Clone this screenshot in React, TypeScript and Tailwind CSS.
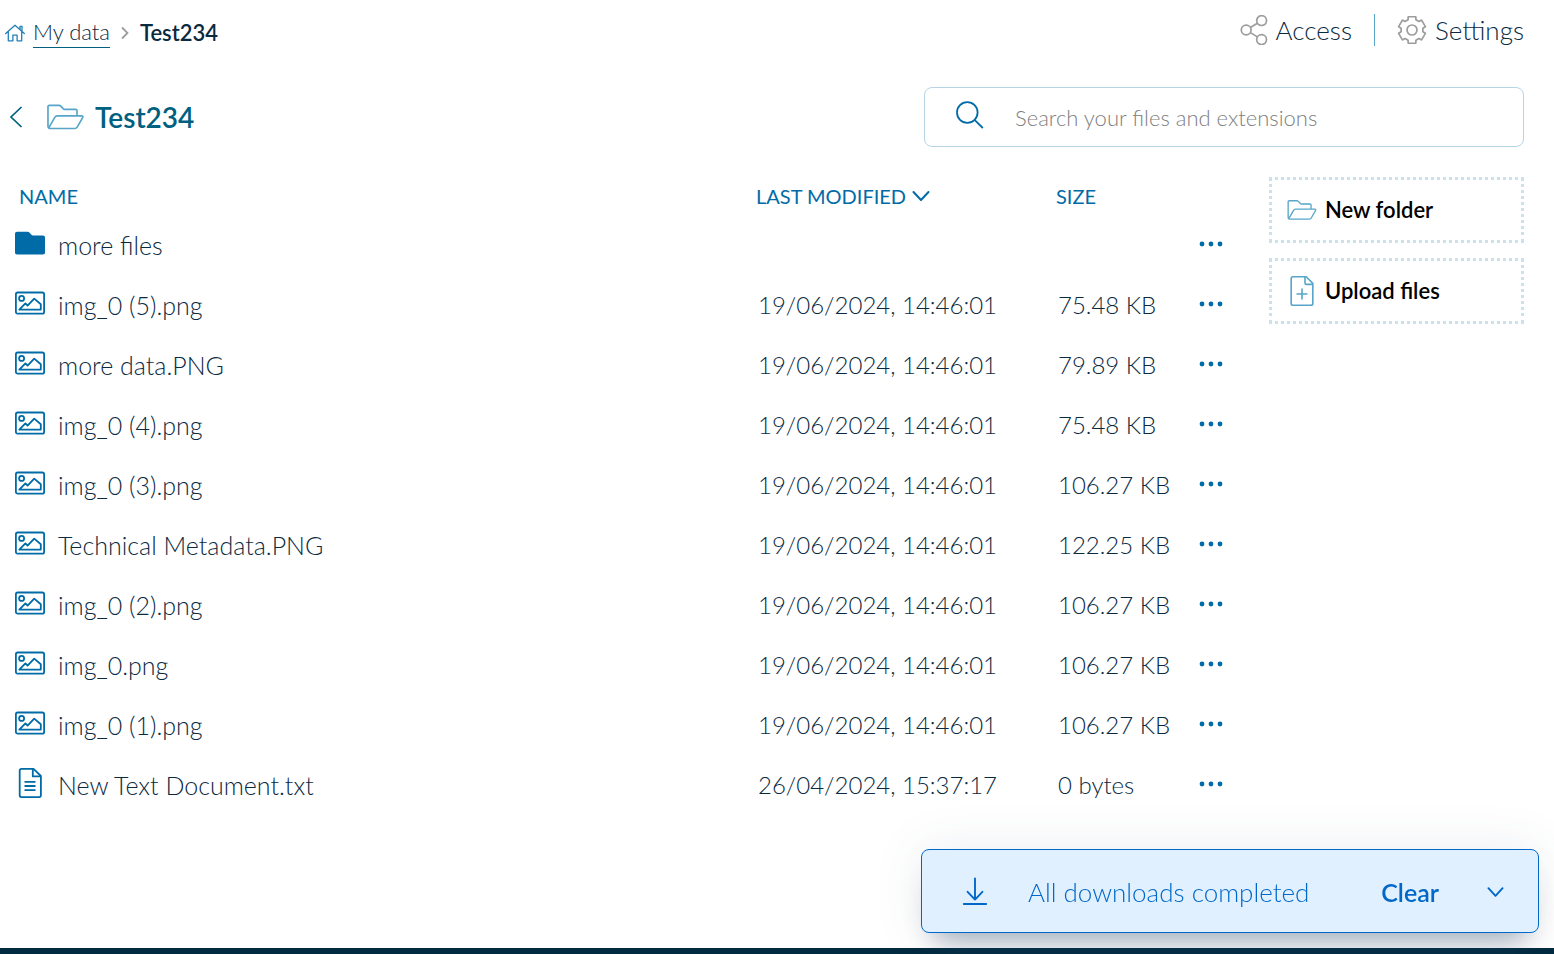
import type { ReactNode } from "react";

type FileKind = "folder" | "image" | "text";

interface FileEntry {
  name: string;
  kind: FileKind;
  modified: string;
  size: string;
}

const files: FileEntry[] = [
  { name: "more files", kind: "folder", modified: "", size: "" },
  { name: "img_0 (5).png", kind: "image", modified: "19/06/2024, 14:46:01", size: "75.48 KB" },
  { name: "more data.PNG", kind: "image", modified: "19/06/2024, 14:46:01", size: "79.89 KB" },
  { name: "img_0 (4).png", kind: "image", modified: "19/06/2024, 14:46:01", size: "75.48 KB" },
  { name: "img_0 (3).png", kind: "image", modified: "19/06/2024, 14:46:01", size: "106.27 KB" },
  { name: "Technical Metadata.PNG", kind: "image", modified: "19/06/2024, 14:46:01", size: "122.25 KB" },
  { name: "img_0 (2).png", kind: "image", modified: "19/06/2024, 14:46:01", size: "106.27 KB" },
  { name: "img_0.png", kind: "image", modified: "19/06/2024, 14:46:01", size: "106.27 KB" },
  { name: "img_0 (1).png", kind: "image", modified: "19/06/2024, 14:46:01", size: "106.27 KB" },
  { name: "New Text Document.txt", kind: "text", modified: "26/04/2024, 15:37:17", size: "0 bytes" },
];

function HomeIcon() {
  return (
    <svg viewBox="0 0 20 18" className="h-[18px] w-5 shrink-0 text-[#2280b8]" fill="none" stroke="currentColor" strokeWidth="1.3" aria-hidden="true">
      <path d="M.7 9.6 10 1.2l9.3 8.4M3.3 7.6v9.2h4.6v-5.6h4.2v5.6h4.6V7.6M15 5.4V2.3h2v5" strokeLinejoin="round" strokeLinecap="round" />
    </svg>
  );
}

function OpenFolderIcon({ className }: { className: string }) {
  return (
    <svg viewBox="0 0 38 26" className={className} fill="none" stroke="currentColor" strokeWidth="1.7" strokeLinejoin="round" aria-hidden="true">
      <path d="M1.8 24.2C1.2 24 1 23.4 1 22.6V2.4C1 1.4 1.6 1 2.4 1h10c.8 0 1.2.2 1.8.8l2.6 2.8c.5.5 1 .6 1.6.6h11c1 0 1.4.5 1.4 1.4v5.2" />
      <path d="M1.8 24.2 8 13.4c.7-1.2 1.4-1.6 2.6-1.6h25c1.2 0 1.6.7 1 1.8l-5.6 9.8c-.6 1-1.2 1.4-2.4 1.4H3c-.7 0-1-.2-1.2-.6z" />
    </svg>
  );
}

function ShareIcon() {
  return (
    <svg viewBox="0 0 28 30" className="h-[30px] w-7 shrink-0 text-[#9d9d9d]" fill="none" stroke="currentColor" strokeWidth="1.7" aria-hidden="true">
      <circle cx="6.2" cy="15" r="4.9" />
      <circle cx="21.6" cy="5.6" r="4.9" />
      <circle cx="21.6" cy="24.6" r="4.9" />
      <path d="m10.4 12.4 7-4.2M10.4 17.6l7 4.3" />
    </svg>
  );
}

const gearTooth = [
  [-16, 13.8],
  [16, 13.8],
  [21, 11],
  [39, 11],
];

const gearPoints = [0, 60, 120, 180, 240, 300]
  .flatMap((turn) =>
    gearTooth.map(([angle, radius]) => {
      const a = ((turn + angle) * Math.PI) / 180;
      return `${(15 + radius * Math.sin(a)).toFixed(2)},${(15 - radius * Math.cos(a)).toFixed(2)}`;
    }),
  )
  .join(" ");

function GearIcon() {
  return (
    <svg viewBox="0 0 30 30" className="size-[30px] shrink-0 text-[#9d9d9d]" fill="none" stroke="currentColor" strokeWidth="1.7" strokeLinejoin="round" aria-hidden="true">
      <polygon points={gearPoints} />
      <circle cx="15" cy="15" r="5" />
    </svg>
  );
}

function SearchIcon() {
  return (
    <svg viewBox="0 0 28 28" className="size-7 shrink-0 text-[#006ba6]" fill="none" stroke="currentColor" strokeWidth="1.8" aria-hidden="true">
      <circle cx="11.3" cy="11.5" r="10.3" />
      <path d="m18.8 19.2 8 7.8" />
    </svg>
  );
}

function FolderIcon() {
  return (
    <svg viewBox="0 0 30 24" className="h-6 w-[30px]" fill="#006ba6" aria-hidden="true">
      <path d="M2.2.8h10.4c.9 0 1.4.3 2 .9l1.8 2c.5.5.9.7 1.6.7h9.8c1.5 0 2.2.7 2.2 2.2v14.6c0 1.5-.7 2.2-2.2 2.2H2.2C.7 23.4 0 22.7 0 21.2V3C0 1.5.7.8 2.2.8z" />
    </svg>
  );
}

function ImageIcon() {
  return (
    <svg viewBox="0 0 30 24" className="h-6 w-[30px]" fill="none" stroke="#006ba6" strokeWidth="1.8" strokeLinejoin="round" aria-hidden="true">
      <rect x=".9" y="1.5" width="28.2" height="21.2" rx="1.8" />
      <circle cx="6.6" cy="7.4" r="2.5" />
      <path d="M4.300 18.600h21.500v-5.400L19.200 7.600l-6.600 7-2.200-2.200z" />
    </svg>
  );
}

function TextIcon() {
  return (
    <svg viewBox="0 0 30 30" className="size-[30px]" fill="none" stroke="#006ba6" strokeWidth="1.8" strokeLinejoin="round" aria-hidden="true">
      <path d="M18.5.9H6.500c-1.200 0-1.800.6-1.800 1.800v24.600c0 1.200.6 1.800 1.800 1.800h17.600c1.200 0 1.800-.6 1.800-1.800V8z" />
      <path d="M17.800 1v7.400h8.100M9.500 13.800h11M9.500 18h11M9.500 22.200h11" />
    </svg>
  );
}

function UploadIcon() {
  return (
    <svg viewBox="0 0 30 30" className="size-[30px] shrink-0 text-[#57a5c8]" fill="none" stroke="currentColor" strokeWidth="1.6" strokeLinejoin="round" aria-hidden="true">
      <path d="M19.200.8H6c-1.200 0-1.800.6-1.800 1.800v24.800c0 1.200.6 1.800 1.800 1.800h18c1.200 0 1.800-.6 1.800-1.800V7.400z" />
      <path d="M18 1v6c0 1 .4 1.400 1.400 1.400h6.400M15 12.500v11M9.500 18h11" />
    </svg>
  );
}

function DownloadIcon() {
  return (
    <svg viewBox="0 0 26 30" className="h-[30px] w-[26px] shrink-0" fill="none" stroke="currentColor" strokeWidth="1.9" aria-hidden="true">
      <path d="M13 1.500v21M5.600 14.800l7.400 7.800 7.400-7.800" strokeLinejoin="round" strokeLinecap="round" />
      <path d="M1.800 27h22.400" strokeLinecap="round" />
    </svg>
  );
}

function ChevronDown({ className }: { className: string }) {
  return (
    <svg viewBox="0 0 18 12" className={className} fill="none" stroke="currentColor" strokeWidth="2" strokeLinecap="round" strokeLinejoin="round" aria-hidden="true">
      <path d="m1.500 2 7.500 8 7.500-8" />
    </svg>
  );
}

const kindIcon: Record<FileKind, ReactNode> = {
  folder: <FolderIcon />,
  image: <ImageIcon />,
  text: <TextIcon />,
};

function Header() {
  return (
    <header className="flex h-[60px] items-center justify-between pr-[30px] pl-[5px]">
      <nav aria-label="Breadcrumb" className="flex items-center pt-1.5 text-[22px] leading-7">
        <a href="#home" aria-label="Home">
          <HomeIcon />
        </a>
        <a href="#my-data" className="ml-2 border-b border-[#006080] pb-px font-light">
          My data
        </a>
        <svg viewBox="0 0 8 14" className="mx-[11px] h-3.5 w-2" fill="none" stroke="#9d9d9d" strokeWidth="1.8" aria-hidden="true">
          <path d="m1 1.500 5.500 5.500L1 12.500" />
        </svg>
        <span aria-current="page" className="font-semibold">
          Test234
        </span>
      </nav>
      <div className="flex items-center text-[26px] leading-[30px] font-light">
        <button type="button" className="flex items-center gap-2">
          <ShareIcon />
          Access
        </button>
        <span className="mx-[22px] h-8 w-px bg-[#57a5c8]" />
        <button type="button" className="flex items-center gap-2">
          <GearIcon />
          Settings
        </button>
      </div>
    </header>
  );
}

function TitleBar() {
  return (
    <div className="flex items-center justify-between pt-[27px] pr-[30px] pl-[9px]">
      <div className="flex items-center text-[#006080]">
        <a href="#back" aria-label="Back">
          <svg viewBox="0 0 14 22" className="h-[22px] w-3.5" fill="none" stroke="currentColor" strokeWidth="1.7" aria-hidden="true">
            <path d="M12.500 1 2 11l10.500 10" />
          </svg>
        </a>
        <OpenFolderIcon className="ml-6 h-[26px] w-[37px] text-[#57a5c8]" />
        <h1 className="ml-[11px] text-[28px] leading-9 font-semibold">Test234</h1>
      </div>
      <label className="flex h-[60px] w-[600px] items-center rounded-lg border border-[#b5d5e5] pr-4 pl-[31px]">
        <span className="pb-1">
          <SearchIcon />
        </span>
        <input
          type="search"
          aria-label="Search your files and extensions"
          placeholder="Search your files and extensions"
          className="ml-[31px] min-w-0 flex-1 bg-transparent text-[22px] font-light outline-none placeholder:text-[#808080]"
        />
      </label>
    </div>
  );
}

function FileTable() {
  return (
    <table className="flex-1 table-fixed border-collapse text-left">
      <thead>
        <tr className="h-[39px] text-xl text-[#006ba6]">
          <th scope="col" className="pb-0.5 pl-[19px] font-normal">
            NAME
          </th>
          <th scope="col" className="w-[300px] pb-0.5 font-normal">
            <button type="button" className="flex items-center gap-1.5">
              LAST MODIFIED
              <ChevronDown className="h-3 w-[18px]" />
            </button>
          </th>
          <th scope="col" className="w-[140px] pb-0.5 font-normal">
            SIZE
          </th>
          <th scope="col" aria-label="Actions" className="w-[58px]" />
        </tr>
      </thead>
      <tbody>
        {files.map((file) => (
          <tr key={file.name} className="h-[60px] text-2xl font-light">
            <td className="pb-0.5 pl-[15px] text-[25px] leading-8">
              <a href="#open" className="flex items-center gap-[13px]">
                <span className="pb-1">{kindIcon[file.kind]}</span>
                {file.name}
              </a>
            </td>
            <td className="pb-0.5 pl-0.5">{file.modified}</td>
            <td className="pb-0.5 pl-0.5">{file.size}</td>
            <td>
              <button type="button" aria-label={`Actions for ${file.name}`} className="flex pb-1 pl-[3px]">
                <svg viewBox="0 0 24 6" className="h-1.5 w-6" fill="#006ba6" aria-hidden="true">
                  <circle cx="3" cy="3" r="2.4" />
                  <circle cx="12" cy="3" r="2.4" />
                  <circle cx="21" cy="3" r="2.4" />
                </svg>
              </button>
            </td>
          </tr>
        ))}
      </tbody>
    </table>
  );
}

function SideAction({ icon, label }: { icon: ReactNode; label: string }) {
  return (
    <button type="button" className="flex h-[66px] items-center gap-2 border-3 border-dotted border-[#cbe2ed] px-[15px] text-[22px] font-semibold text-black">
      {icon}
      <span className="pb-0.5">{label}</span>
    </button>
  );
}

function DownloadToast() {
  return (
    <section
      aria-label="Downloads"
      className="fixed right-[15px] bottom-[21px] flex h-[84px] w-[618px] items-center rounded-lg border border-[#0068c9] bg-[#e0f0ff] pt-0.5 pr-[34px] pl-10 text-[#0068c9] shadow-[0_22px_28px_-14px_rgba(60,80,110,0.45),0_0_50px_rgba(60,80,110,0.1)]"
    >
      <DownloadIcon />
      <p className="ml-10 flex-1 text-[26px] leading-8 font-light">All downloads completed</p>
      <button type="button" className="text-[25px] leading-8 font-semibold">
        Clear
      </button>
      <button type="button" aria-label="Expand downloads" className="ml-12">
        <ChevronDown className="h-3 w-[17px]" />
      </button>
    </section>
  );
}

export default function App() {
  return (
    <div className="flex min-h-screen flex-col bg-white font-['Lato','Liberation_Sans',sans-serif] text-[#0a2a3f]">
      <Header />
      <TitleBar />
      <main className="flex flex-1 items-start gap-[15px] pt-[30px] pr-[30px]">
        <FileTable />
        <aside className="flex w-[255px] flex-col gap-[15px]">
          <SideAction icon={<OpenFolderIcon className="h-5 w-[30px] shrink-0 text-[#57a5c8]" />} label="New folder" />
          <SideAction icon={<UploadIcon />} label="Upload files" />
        </aside>
      </main>
      <footer className="h-1.5 bg-[#012b41]" />
      <DownloadToast />
    </div>
  );
}
